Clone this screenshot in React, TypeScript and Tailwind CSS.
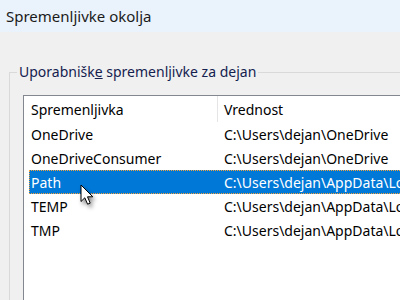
import React from "react";

const rows = [
  { name: "OneDrive", value: "C:\\Users\\dejan\\OneDrive" },
  { name: "OneDriveConsumer", value: "C:\\Users\\dejan\\OneDrive" },
  { name: "Path", value: "C:\\Users\\dejan\\AppData\\Local", selected: true },
  { name: "TEMP", value: "C:\\Users\\dejan\\AppData\\Local" },
  { name: "TMP", value: "C:\\Users\\dejan\\AppData\\Local" },
];

function Cursor() {
  return (
    <svg
      className="absolute left-[80px] top-[184px]"
      width="16"
      height="24"
      viewBox="0 0 16 24"
      style={{ filter: "drop-shadow(2px 3px 2px rgba(0,0,0,0.45))" }}
    >
      <path
        d="M1 1 L1 17.5 L4.8 13.8 L7.6 20.2 L10.2 19.1 L7.5 12.8 L12.8 12.8 Z"
        fill="#ffffff"
        stroke="#000000"
        strokeWidth="1"
        strokeLinejoin="miter"
      />
    </svg>
  );
}

export default function App() {
  return (
    <div
      className="relative w-[400px] h-[300px] overflow-hidden bg-[#f0f0f0] flex flex-col text-[14px] text-black"
      style={{ fontFamily: '"Noto Sans", "Open Sans", sans-serif' }}
    >
      <div className="h-[32px] shrink-0 bg-[#eaf2fb] pl-[6px] flex items-center text-[15px] text-[#1a1a1a]">
        Spremenljivke okolja
      </div>
      <fieldset className="mt-[30px] ml-[9px] border-l border-t border-[#d9d9d9] flex-1 min-w-0 p-0">
        <legend className="ml-[7px] px-[2px] leading-[20px] text-[#14214f]">
          Uporabnišk<span className="underline">e</span> spremenljivke za dejan
        </legend>
        <div className="mt-[13px] ml-[13px] w-[420px] h-[260px] border border-[#828790] bg-white overflow-hidden">
          <div className="h-[26px] flex items-center">
            <div className="w-[194px] shrink-0 h-full border-r border-[#e5e5e5] pl-[7px] flex items-center">
              Spremenljivka
            </div>
            <div className="pl-[6px]">Vrednost</div>
          </div>
          {rows.map((r) => (
            <div
              key={r.name}
              className={
                r.selected
                  ? "ml-[5px] h-[24px] flex items-center bg-[#0078d7] text-white outline-1 outline-dotted outline-offset-[-1px] outline-[#f7a13a]"
                  : "ml-[5px] h-[24px] flex items-center"
              }
            >
              <div className="w-[188px] shrink-0 pl-[2px] whitespace-nowrap">{r.name}</div>
              <div className="pl-[7px] whitespace-nowrap">{r.value}</div>
            </div>
          ))}
        </div>
      </fieldset>
      <Cursor />
    </div>
  );
}
